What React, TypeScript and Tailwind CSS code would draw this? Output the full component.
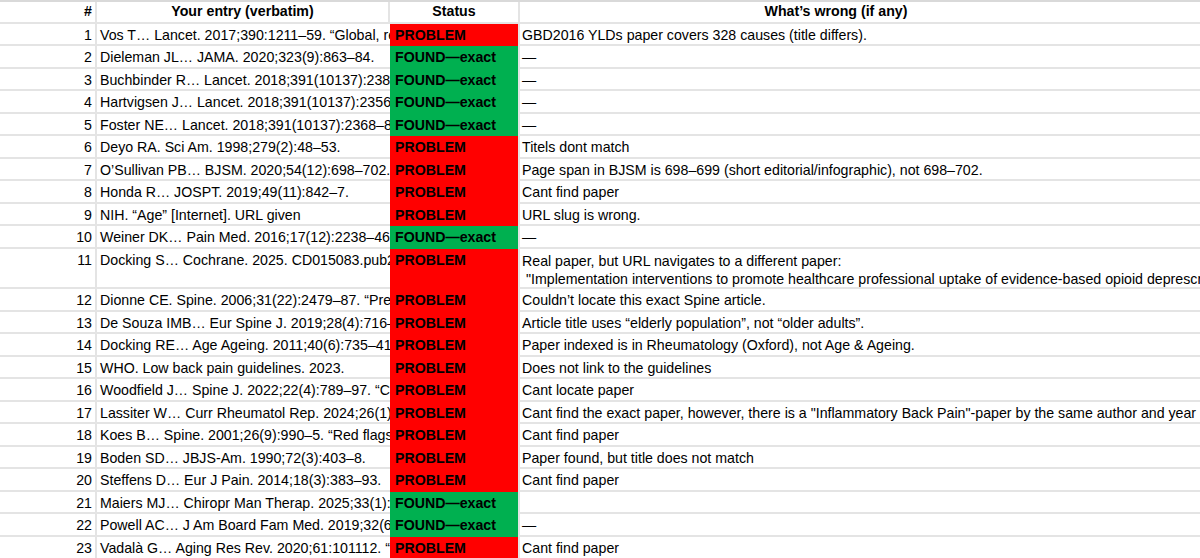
import React from "react";

type Row = {
  n: number;
  entry: string;
  ok: boolean;
  note: string;
  tall?: boolean;
};

const rows: Row[] = [
  { n: 1, entry: "Vos T… Lancet. 2017;390:1211–59. “Global, regional, and national incidence", ok: false, note: "GBD2016 YLDs paper covers 328 causes (title differs)." },
  { n: 2, entry: "Dieleman JL… JAMA. 2020;323(9):863–84.", ok: true, note: "—" },
  { n: 3, entry: "Buchbinder R… Lancet. 2018;391(10137):2384–8.", ok: true, note: "—" },
  { n: 4, entry: "Hartvigsen J… Lancet. 2018;391(10137):2356–67.", ok: true, note: "—" },
  { n: 5, entry: "Foster NE… Lancet. 2018;391(10137):2368–83.", ok: true, note: "—" },
  { n: 6, entry: "Deyo RA. Sci Am. 1998;279(2):48–53.", ok: false, note: "Titels dont match" },
  { n: 7, entry: "O’Sullivan PB… BJSM. 2020;54(12):698–702.", ok: false, note: "Page span in BJSM is 698–699 (short editorial/infographic), not 698–702." },
  { n: 8, entry: "Honda R… JOSPT. 2019;49(11):842–7.", ok: false, note: "Cant find paper" },
  { n: 9, entry: "NIH. “Age” [Internet]. URL given", ok: false, note: "URL slug is wrong." },
  { n: 10, entry: "Weiner DK… Pain Med. 2016;17(12):2238–46.", ok: true, note: "—" },
  {
    n: 11,
    entry: "Docking S… Cochrane. 2025. CD015083.pub2.",
    ok: false,
    note: "Real paper, but URL navigates to a different paper:\n \"Implementation interventions to promote healthcare professional uptake of evidence-based opioid deprescribing\"",
    tall: true,
  },
  { n: 12, entry: "Dionne CE. Spine. 2006;31(22):2479–87. “Predictors", ok: false, note: "Couldn’t locate this exact Spine article." },
  { n: 13, entry: "De Souza IMB… Eur Spine J. 2019;28(4):716–24.", ok: false, note: "Article title uses “elderly population”, not “older adults”." },
  { n: 14, entry: "Docking RE… Age Ageing. 2011;40(6):735–41.", ok: false, note: "Paper indexed is in Rheumatology (Oxford), not Age & Ageing." },
  { n: 15, entry: "WHO. Low back pain guidelines. 2023.", ok: false, note: "Does not link to the guidelines" },
  { n: 16, entry: "Woodfield J… Spine J. 2022;22(4):789–97. “Clinical", ok: false, note: "Cant locate paper" },
  { n: 17, entry: "Lassiter W… Curr Rheumatol Rep. 2024;26(1):1–10.", ok: false, note: "Cant find the exact paper, however, there is a \"Inflammatory Back Pain\"-paper by the same author and year" },
  { n: 18, entry: "Koes B… Spine. 2001;26(9):990–5. “Red flags”", ok: false, note: "Cant find paper" },
  { n: 19, entry: "Boden SD… JBJS-Am. 1990;72(3):403–8.", ok: false, note: "Paper found, but title does not match" },
  { n: 20, entry: "Steffens D… Eur J Pain. 2014;18(3):383–93.", ok: false, note: "Cant find paper" },
  { n: 21, entry: "Maiers MJ… Chiropr Man Therap. 2025;33(1):12.", ok: true, note: "" },
  { n: 22, entry: "Powell AC… J Am Board Fam Med. 2019;32(6):812–20.", ok: true, note: "—" },
  { n: 23, entry: "Vadalà G… Aging Res Rev. 2020;61:101112. “Low", ok: false, note: "Cant find paper" },
];

function SheetRow({ row }: { row: Row }) {
  const h = row.tall ? "h-[40px]" : "h-[22.55px]";
  return (
    <div className={`flex ${h}`}>
      <div className="w-[97px] shrink-0 border-r-2 border-b-2 border-[#e4e4e4] text-right pr-[3px] pt-[3px]">
        {row.n}
      </div>
      <div className="w-[293px] shrink-0 border-b-2 border-[#e4e4e4] overflow-hidden whitespace-nowrap pl-[3px] pt-[3px]">
        {row.entry}
      </div>
      <div
        className={`w-[128px] shrink-0 font-bold pl-[5px] pt-[3px] whitespace-nowrap ${
          row.ok ? "bg-[#00b050]" : "bg-[#ff0000]"
        }`}
      >
        {row.ok ? "FOUND—exact" : "PROBLEM"}
      </div>
      <div
        className={`flex-1 border-l-2 border-b-2 border-[#e4e4e4] pl-[2px] pt-[3px] whitespace-pre ${
          row.tall ? "leading-[18px]" : ""
        }`}
      >
        {row.note}
      </div>
    </div>
  );
}

export default function App() {
  return (
    <div className="w-[1200px] h-[558px] overflow-hidden bg-white text-black text-[14.2px] leading-[17px] font-['Liberation_Sans',Arial,sans-serif]">
      <div className="border-t-2 border-[#d9d9d9]">
        <div className="flex h-[21.5px] font-bold">
          <div className="w-[97px] shrink-0 border-r-2 border-b-2 border-[#e4e4e4] text-right pr-[3px] pt-[1px]">
            #
          </div>
          <div className="w-[293px] shrink-0 border-r-2 border-b-2 border-[#e4e4e4] text-center pt-[1px]">
            Your entry (verbatim)
          </div>
          <div className="w-[128px] shrink-0 border-b-2 border-[#e4e4e4] text-center pt-[1px]">
            Status
          </div>
          <div className="flex-1 border-l-2 border-b-2 border-[#e4e4e4] text-center pr-[48px] pt-[1px]">
            What’s wrong (if any)
          </div>
        </div>
        {rows.map((r) => (
          <SheetRow key={r.n} row={r} />
        ))}
      </div>
    </div>
  );
}
